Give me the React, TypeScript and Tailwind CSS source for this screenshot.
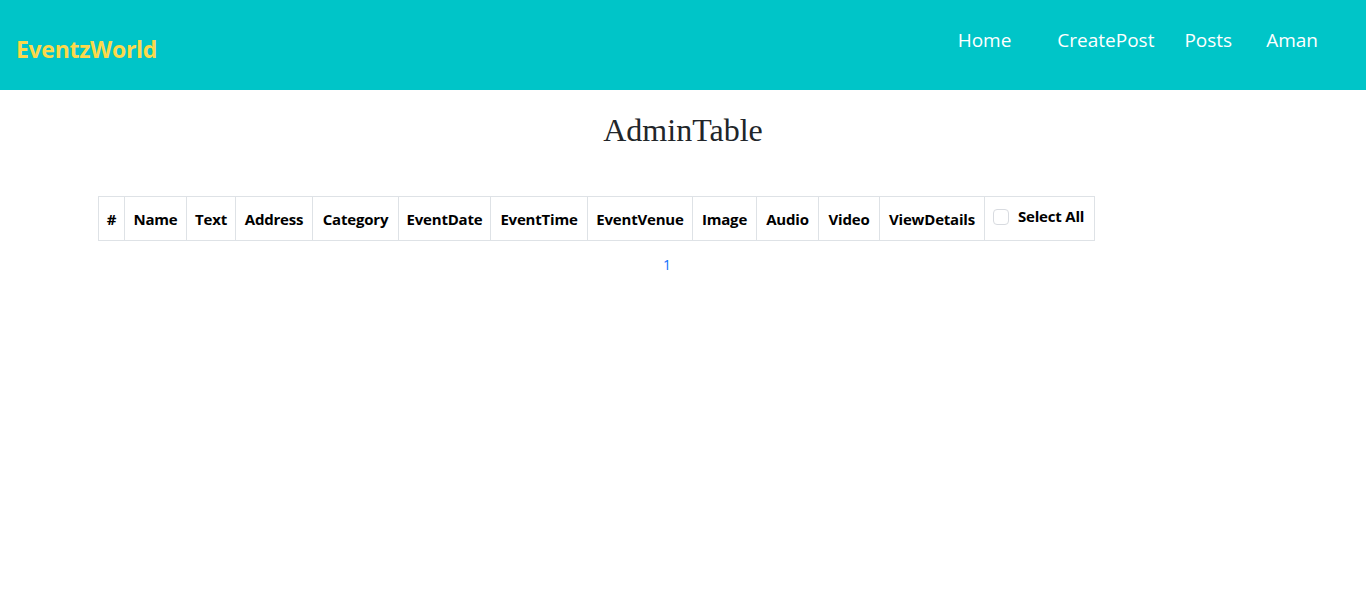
const columns: { label: string; w: string }[] = [
  { label: "#", w: "w-[26px]" },
  { label: "Name", w: "w-[62px]" },
  { label: "Text", w: "w-[49px]" },
  { label: "Address", w: "w-[77px]" },
  { label: "Category", w: "w-[86px]" },
  { label: "EventDate", w: "w-[92px]" },
  { label: "EventTime", w: "w-[97px]" },
  { label: "EventVenue", w: "w-[105px]" },
  { label: "Image", w: "w-[64px]" },
  { label: "Audio", w: "w-[62px]" },
  { label: "Video", w: "w-[61px]" },
  { label: "ViewDetails", w: "w-[105px]" },
];

const Navbar = () => {
  return (
    <nav className="flex items-center justify-between h-[90px] bg-[#00c5c8] pl-4 pr-12 font-['Open_Sans',sans-serif]">
      <a className="text-[23px] font-bold text-[#fcd84a] tracking-[-0.3px] mt-[8px]">
        EventzWorld
      </a>
      <ul className="flex items-center text-[19px] text-white -mt-[10px]">
        <li className="mr-[46px]">Home</li>
        <li className="mr-[30px]">CreatePost</li>
        <li className="mr-[34px]">Posts</li>
        <li>Aman</li>
      </ul>
    </nav>
  );
};

const App = () => {
  return (
    <div className="min-h-[607px] bg-white">
      <Navbar />
      <h1 className="text-center text-[32px] leading-[38px] text-[#212529] font-['Liberation_Serif',serif] mt-[21px]">
        AdminTable
      </h1>
      <section className="pl-[98px] mt-[47px] font-['Open_Sans',sans-serif]">
        <table className="border-collapse">
          <thead>
            <tr className="h-[44px]">
              {columns.map((c) => (
                <th
                  key={c.label}
                  className={`${c.w} border border-[#dee2e6] text-center text-[15px] font-bold text-black px-0 pt-[2px] tracking-[-0.2px]`}
                >
                  {c.label}
                </th>
              ))}
              <th className="w-[110px] border border-[#dee2e6] text-[15px] font-bold text-black px-0">
                <div className="flex items-center gap-[9px] pl-[8px] -mt-[4px]">
                  <span className="inline-block w-[16px] h-[16px] rounded-[4px] border border-[#d8dbe0] bg-white" />
                  <span className="tracking-[-0.2px]">Select All</span>
                </div>
              </th>
            </tr>
          </thead>
        </table>
      </section>
      <div className="pl-[663px] mt-[13px] text-[14px] text-[#0d6efd] font-['Open_Sans',sans-serif]">
        1
      </div>
    </div>
  );
};

export default App;
